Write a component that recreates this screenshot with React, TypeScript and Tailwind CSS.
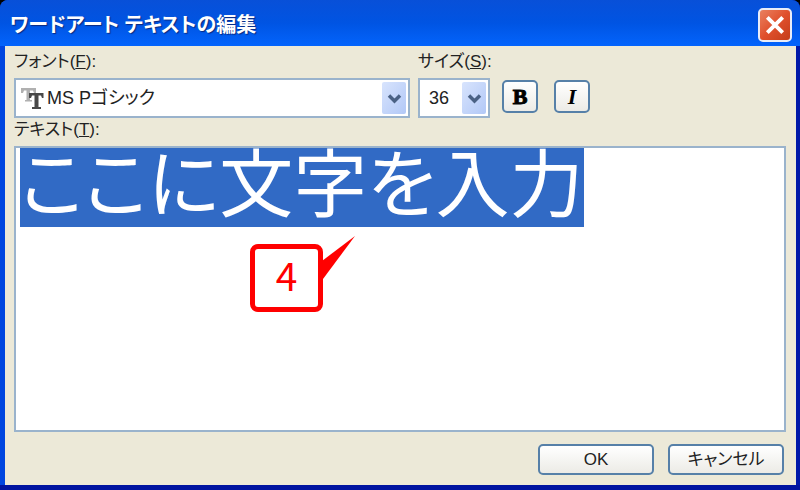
import { useEffect, useRef, useState } from 'react'

const fonts = ['MS Pゴシック', 'MS P明朝', 'MS ゴシック', 'MS 明朝']
const sizes = ['24', '28', '32', '36', '40', '44']

function DropArrow({ className }: { className: string }) {
  return (
    <span
      className={`pointer-events-none absolute inset-y-[2px] right-[2px] flex items-center justify-center rounded-xs bg-linear-to-br from-[#d8e4fd] to-[#b2c8f6] ${className}`}
    >
      <svg width="15" height="11" viewBox="0 0 15 11" fill="none" aria-hidden="true">
        <path d="M2 2.5 7.5 8 13 2.5" stroke="#4a6184" strokeWidth="3.500" />
      </svg>
    </span>
  )
}

function TrueTypeIcon() {
  return (
    <svg
      className="pointer-events-none absolute left-[4px] top-[7px]"
      width="24"
      height="24"
      viewBox="0 0 24 24"
      aria-hidden="true"
    >
      <path d="M1 1h15v5h-2l-1-2.500h-3V13h2v1.500H5V13h1.500V3.500H4L3 6H1z" fill="#b0b0b0" />
      <path d="M9 6h14.500v5H22l-1-2.500h-2.500V20H21v2h-9v-2h2.500V8.500H12L11 11H9z" fill="#484848" />
    </svg>
  )
}

export default function App() {
  const [font, setFont] = useState(fonts[0])
  const [size, setSize] = useState('36')
  const [text, setText] = useState('ここに文字を入力')
  const editor = useRef<HTMLTextAreaElement>(null)

  useEffect(() => {
    editor.current?.focus()
    editor.current?.select()
  }, [])

  return (
    <div className="min-h-screen bg-black font-['Liberation_Sans','Noto_Sans_CJK_JP',sans-serif] text-[17px] text-[#222] [font-feature-settings:'palt']">
      <div className="flex min-h-screen flex-col rounded-t-lg bg-linear-to-r from-[#0046e0] to-[#0018a8] pr-1 pl-[5px]">
        <header className="-mr-1 -ml-[5px] flex h-[46px] shrink-0 items-center justify-between rounded-t-lg bg-linear-to-b from-[#0850d8] via-[#0054e3] to-[#0364fc] pl-[10px] pr-2 pt-1">
          <h1 className="text-[20px] leading-6 font-bold text-white [text-shadow:1px_1px_1px_#0a2a80]">
            ワードアート テキストの編集
          </h1>
          <button
            type="button"
            aria-label="閉じる"
            className="flex size-[34px] items-center justify-center rounded-[5px] border-2 border-[#e9edf8] bg-linear-to-br from-[#e9805f] via-[#e0502c] to-[#c43d1a]"
          >
            <svg width="22" height="22" viewBox="0 0 20 20" aria-hidden="true">
              <path d="m3 3 14 14M17 3 3 17" stroke="#fff" strokeWidth="3.500" />
            </svg>
          </button>
        </header>

        <main className="flex flex-1 flex-col bg-[#ece9d8] pr-[10px] pl-[9px] pt-1 pb-[10px]">
          <div className="flex items-end gap-2">
            <div className="flex w-[396px] flex-col gap-1">
              <label htmlFor="font" className="leading-6">
                フォント(<u>F</u>):
              </label>
              <div className="relative h-10 border-2 border-[#9ab3cc] bg-white">
                <TrueTypeIcon />
                <select
                  id="font"
                  value={font}
                  onChange={(e) => setFont(e.target.value)}
                  className="size-full appearance-none pl-[31px] text-[18px] outline-none"
                >
                  {fonts.map((name) => (
                    <option key={name}>{name}</option>
                  ))}
                </select>
                <DropArrow className="w-6" />
              </div>
            </div>

            <div className="flex w-[72px] flex-col gap-1">
              <label htmlFor="size" className="leading-6 whitespace-nowrap">
                サイズ(<u>S</u>):
              </label>
              <div className="relative h-10 border-2 border-[#9ab3cc] bg-white">
                <select
                  id="size"
                  value={size}
                  onChange={(e) => setSize(e.target.value)}
                  className="size-full appearance-none pl-[9px] text-[18px] outline-none"
                >
                  {sizes.map((pt) => (
                    <option key={pt}>{pt}</option>
                  ))}
                </select>
                <DropArrow className="w-6" />
              </div>
            </div>

            <div className="flex gap-4 pb-[5px] pl-1">
              <button
                type="button"
                aria-label="太字"
                className="h-[33px] w-9 rounded-[5px] border-2 border-[#5680a8] bg-linear-to-b from-white to-[#ecebe6] font-['Liberation_Serif',serif] text-[22px] leading-6 font-bold text-black [-webkit-text-stroke:1px_black]"
              >
                B
              </button>
              <button
                type="button"
                aria-label="斜体"
                className="h-[33px] w-9 rounded-[5px] border-2 border-[#5680a8] bg-linear-to-b from-white to-[#ecebe6] font-['Liberation_Serif',serif] text-[22px] leading-6 font-bold text-black italic"
              >
                I
              </button>
            </div>
          </div>

          <label htmlFor="text" className="pb-1 leading-6">
            テキスト(<u>T</u>):
          </label>
          <div className="relative flex flex-1">
            <textarea
              id="text"
              ref={editor}
              value={text}
              spellCheck={false}
              onChange={(e) => setText(e.target.value)}
              className="w-full resize-none border-2 border-[#9ab3cc] bg-white px-1 py-0 font-['Liberation_Sans','Noto_Sans_CJK_JP',sans-serif] text-[74px] leading-[75px] text-black outline-none [-webkit-text-stroke-width:1px] selection:bg-[#316ac5] selection:text-white"
            />
            <div className="absolute left-[236px] top-[98px] flex h-[68px] w-[73px] items-center justify-center rounded-lg border-5 border-[#f00] bg-white pb-2 font-['Noto_Sans_CJK_JP',sans-serif] text-[39px] leading-10 text-[#f00]">
              4
              <svg
                className="absolute -right-[38px] -top-[13px]"
                width="38"
                height="52"
                viewBox="0 0 38 52"
                aria-hidden="true"
              >
                <path d="M37 0 0 28v20l5-5z" fill="#f00" />
              </svg>
            </div>
          </div>

          <div className="flex justify-end gap-[14px] pt-3 pr-[2px]">
            <button
              type="button"
              className="h-[31px] w-[116px] rounded-[5px] border-2 border-[#5680a8] bg-linear-to-b from-white to-[#ecebe6]"
            >
              OK
            </button>
            <button
              type="button"
              className="h-[31px] w-[116px] rounded-[5px] border-2 border-[#5680a8] bg-linear-to-b from-white to-[#ecebe6]"
            >
              キャンセル
            </button>
          </div>
        </main>
        <div className="-mr-1 -ml-[5px] h-[5px] shrink-0 bg-[#0014a0]" />
      </div>
    </div>
  )
}
